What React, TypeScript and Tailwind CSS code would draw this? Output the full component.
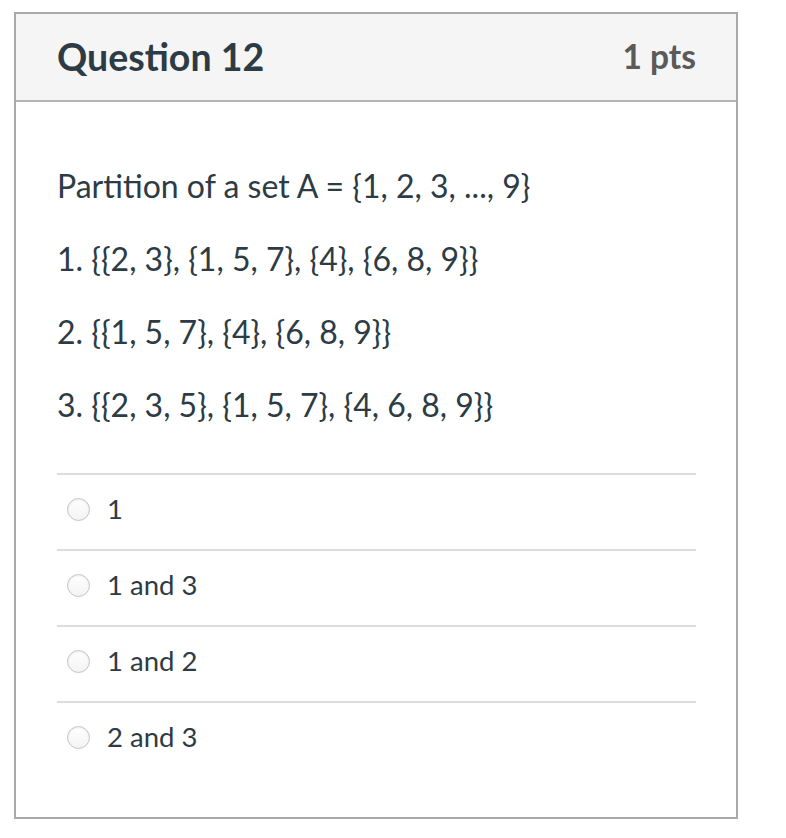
import React from "react";

const lines = [
  "Partition of a set A = {1, 2, 3, ..., 9}",
  "1. {{2, 3}, {1, 5, 7}, {4}, {6, 8, 9}}",
  "2. {{1, 5, 7}, {4}, {6, 8, 9}}",
  "3. {{2, 3, 5}, {1, 5, 7}, {4, 6, 8, 9}}",
];

const options = ["1", "1 and 3", "1 and 2", "2 and 3"];

export default function App() {
  return (
    <div
      className="w-[786px] h-[838px] bg-white pt-[12px] pl-[14px]"
      style={{ fontFamily: "Lato, 'Liberation Sans', sans-serif" }}
    >
      <div className="w-[724px] h-[807px] border-2 border-[#a9a9a9] bg-white flex flex-col">
        <div className="h-[88px] bg-[#f5f5f5] border-b-2 border-[#b5b5b5] flex items-center justify-between pl-[41px] pr-[40px]">
          <span className="text-[37.5px] font-bold text-[#2d3b45] leading-none">Question 12</span>
          <span className="text-[33.5px] font-bold text-[#5a5a5a] leading-none">1 pts</span>
        </div>
        <div className="pl-[41px] pr-[40px] pt-[64px]">
          <div className="flex flex-col gap-[33px] text-[32px] leading-[40px] text-[#2d3b45]">
            {lines.map((l) => (
              <p key={l}>{l}</p>
            ))}
          </div>
          <div className="mt-[48px]">
            {options.map((o) => (
              <div
                key={o}
                className="h-[76px] border-t-2 border-[#dcdcdc] flex items-center pb-[6px]"
              >
                <span className="ml-[10px] w-[23px] h-[23px] rounded-full border border-[#c4c4c4] bg-gradient-to-b from-white to-[#f3f3f3] shadow-[inset_0_1px_2px_rgba(0,0,0,0.08)]" />
                <span className="ml-[17px] text-[27.5px] text-[#2d3b45] leading-none">{o}</span>
              </div>
            ))}
          </div>
        </div>
      </div>
    </div>
  );
}
